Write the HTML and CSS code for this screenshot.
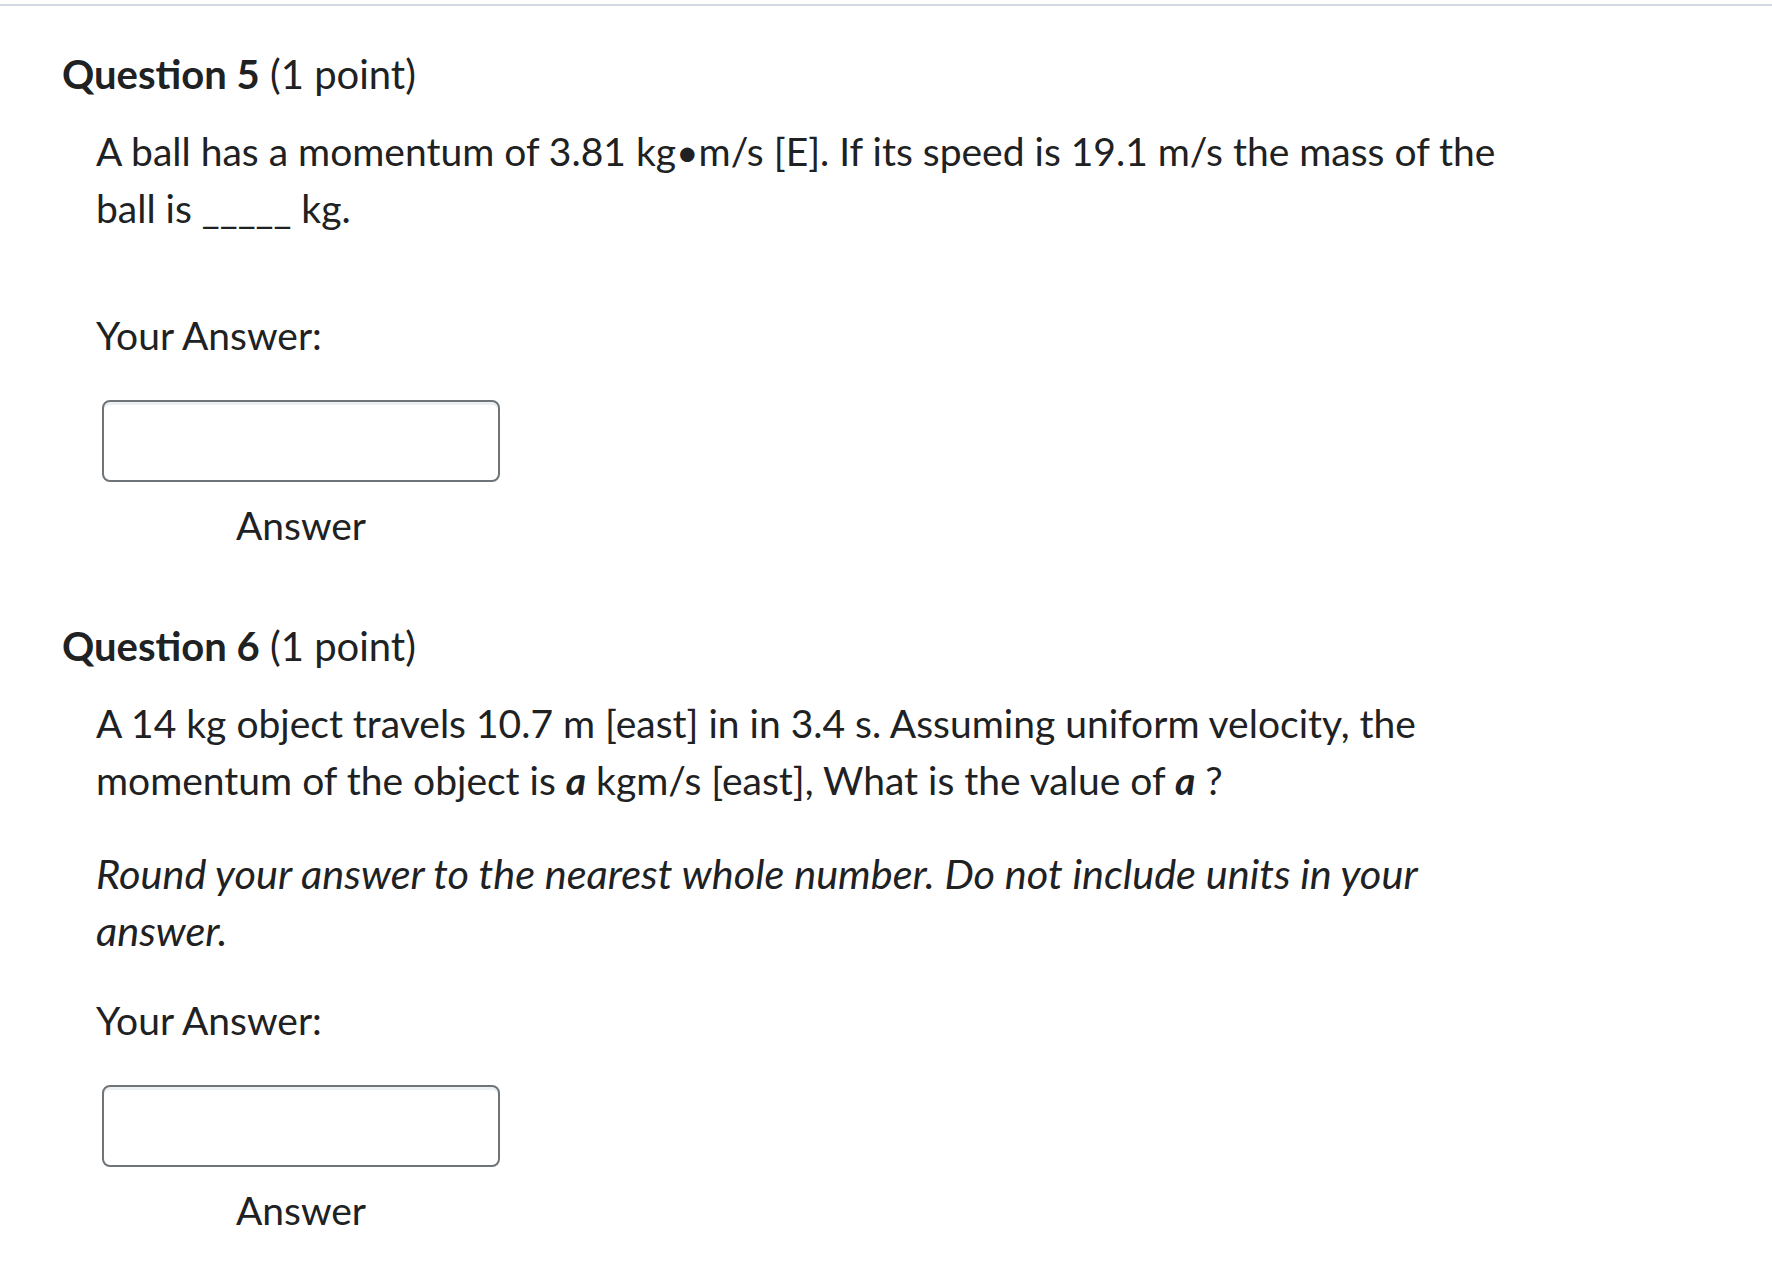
FILE: index.html
```html
<!DOCTYPE html>
<html lang="en">
<head>
<meta charset="utf-8">
<title>Quiz</title>
<link rel="stylesheet" href="styles.css">
</head>
<body>
<div class="topline"></div>
<main class="quiz">
  <section class="question q5">
    <h2 class="q-title"><strong>Question 5</strong> (1 point)</h2>
    <div class="q-body">
      <p class="para stem">A ball has a momentum of 3.81 kg•m/s [E]. If its speed is 19.1 m/s the mass of the ball is _____ kg.</p>
      <p class="para your">Your Answer:</p>
      <div class="answer">
        <input class="answer-input" type="text" aria-label="Answer">
        <div class="answer-label">Answer</div>
      </div>
    </div>
  </section>
  <section class="question q6">
    <h2 class="q-title"><strong>Question 6</strong> (1 point)</h2>
    <div class="q-body">
      <p class="para">A 14 kg object travels 10.7 m [east] in in 3.4 s. Assuming uniform velocity, the momentum of the object is <b><i>a</i></b> kgm/s [east], What is the value of <b><i>a</i></b> ?</p>
      <p class="para note"><i>Round your answer to the nearest whole number. Do not include units in your answer.</i></p>
      <p class="para your">Your Answer:</p>
      <div class="answer">
        <input class="answer-input" type="text" aria-label="Answer">
        <div class="answer-label">Answer</div>
      </div>
    </div>
  </section>
</main>
</body>
</html>
```
FILE: styles.css
```css
html, body {
  margin: 0;
  padding: 0;
  background: #ffffff;
}
body {
  font-family: Lato, "Noto Sans", sans-serif;
  color: #202122;
  font-size: 39px;
}
.topline {
  margin-top: 4px;
  height: 2px;
  background: #d3d9e0;
}
.quiz {
  padding-left: 62px;
  width: 1443px;
}
.question {
  display: flex;
  flex-direction: column;
}
.q5 {
  padding-top: 44px;
}
.q6 {
  padding-top: 73px;
}
.q-title {
  margin: 0;
  font-size: 40px;
  line-height: 48px;
  font-weight: 400;
}
.q-title strong {
  font-weight: 700;
}
.q-body {
  padding-left: 34px;
  padding-top: 25px;
}
.para {
  margin: 0 0 36px 0;
  line-height: 57px;
}
.q5 .stem {
  margin-bottom: 70px;
}
.note {
  margin-bottom: 33px;
  font-size: 41.5px;
}
.your {
  margin-bottom: 36px;
}
.answer {
  width: 398px;
  margin-left: 6px;
  display: flex;
  flex-direction: column;
}
.answer-input {
  box-sizing: border-box;
  width: 398px;
  height: 82px;
  border: 2px solid #6e7477;
  border-radius: 8px;
  box-shadow: inset 0 3px 0 0 rgba(185, 194, 208, 0.25);
  background: #fff;
  margin: 0;
  padding: 0 12px;
  font-family: inherit;
  font-size: 39px;
}
.answer-label {
  margin-top: 19px;
  text-align: center;
  line-height: 48px;
}
```
